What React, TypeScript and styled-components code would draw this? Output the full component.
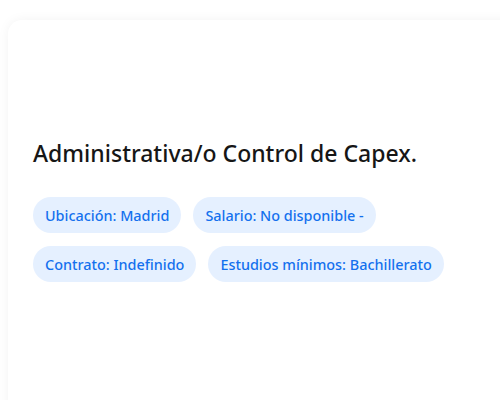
import React from "react";
import styled, { createGlobalStyle } from "styled-components";

const Global = createGlobalStyle`
  html, body {
    margin: 0;
    padding: 0;
    background: #ffffff;
  }
  body {
    font-family: "Noto Sans", "Open Sans", sans-serif;
    -webkit-font-smoothing: antialiased;
  }
`;

const Page = styled.div`
  padding: 20px 0 0 8px;
  height: 380px;
  overflow: hidden;
`;

const Card = styled.section`
  background: #ffffff;
  border-radius: 14px;
  box-shadow: 0 0 12px rgba(0, 0, 0, 0.05);
  min-height: 420px;
  margin-right: -40px;
  padding: 118px 24px 24px 25px;
`;

const Title = styled.h2`
  margin: 0 0 29px;
  font-size: 23px;
  font-weight: 500;
  line-height: 30px;
  color: #161616;
`;

const Tags = styled.div`
  display: flex;
  flex-wrap: wrap;
  gap: 13px 12px;
  max-width: 420px;
`;

const Tag = styled.span`
  display: inline-flex;
  align-items: center;
  height: 36px;
  padding: 0 12px;
  border-radius: 18px;
  background: #e5f0ff;
  color: #1470ee;
  font-size: 14.4px;
  font-weight: 500;
  white-space: nowrap;
`;

const tags = [
  "Ubicación: Madrid",
  "Salario: No disponible -",
  "Contrato: Indefinido",
  "Estudios mínimos: Bachillerato",
];

export default function App() {
  return (
    <>
      <Global />
      <Page>
        <Card>
          <Title>Administrativa/o Control de Capex.</Title>
          <Tags>
            {tags.map((t) => (
              <Tag key={t}>{t}</Tag>
            ))}
          </Tags>
        </Card>
      </Page>
    </>
  );
}
